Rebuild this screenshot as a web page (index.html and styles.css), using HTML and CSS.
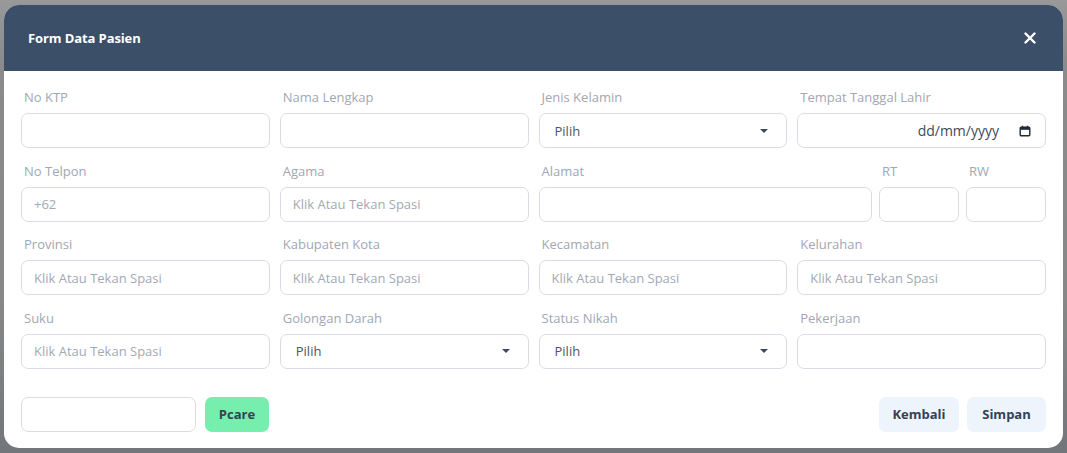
FILE: index.html
```html
<!DOCTYPE html>
<html lang="id">
<head>
    <meta charset="UTF-8">
    <meta name="viewport" content="width=device-width, initial-scale=1.0">
    <title>Form Data Pasien</title>
    <link rel="stylesheet" href="styles.css">
</head>
<body>
    <div class="overlay">
        <div class="modal">
            <div class="modal-header">
                <h2 class="modal-title">Form Data Pasien</h2>
                <button class="close-button" type="button" aria-label="Tutup">
                    <svg width="12" height="12" viewBox="0 0 12 12"><path d="M1.5 1.5 L10.5 10.5 M10.5 1.5 L1.5 10.5" stroke="#fff" stroke-width="2.4" stroke-linecap="round"/></svg>
                </button>
            </div>

            <form class="modal-body">
                <div class="form-grid">
                    <div class="field">
                        <label class="field-label">No KTP</label>
                        <input type="text" class="field-input">
                    </div>
                    <div class="field">
                        <label class="field-label">Nama Lengkap</label>
                        <input type="text" class="field-input">
                    </div>
                    <div class="field">
                        <label class="field-label">Jenis Kelamin</label>
                        <div class="field-input field-select">
                            <span>Pilih</span>
                            <span class="caret"></span>
                        </div>
                    </div>
                    <div class="field">
                        <label class="field-label">Tempat Tanggal Lahir</label>
                        <div class="field-input field-date">
                            <span>dd/mm/yyyy</span>
                            <svg width="12" height="12" viewBox="0 0 12 12"><rect x="1.2" y="2.2" width="9.6" height="8.6" rx="1" fill="none" stroke="#1f2937" stroke-width="1.4"/><rect x="1.2" y="2.2" width="9.6" height="2.6" fill="#1f2937"/><path d="M3.5 0.8 V3 M8.5 0.8 V3" stroke="#1f2937" stroke-width="1.4"/></svg>
                        </div>
                    </div>

                    <div class="field">
                        <label class="field-label">No Telpon</label>
                        <input type="text" class="field-input" placeholder="+62">
                    </div>
                    <div class="field">
                        <label class="field-label">Agama</label>
                        <input type="text" class="field-input" placeholder="Klik Atau Tekan Spasi">
                    </div>
                    <div class="field-split">
                        <div class="field">
                            <label class="field-label">Alamat</label>
                            <input type="text" class="field-input">
                        </div>
                        <div class="field">
                            <label class="field-label">RT</label>
                            <input type="text" class="field-input">
                        </div>
                        <div class="field">
                            <label class="field-label">RW</label>
                            <input type="text" class="field-input">
                        </div>
                    </div>

                    <div class="field">
                        <label class="field-label">Provinsi</label>
                        <input type="text" class="field-input" placeholder="Klik Atau Tekan Spasi">
                    </div>
                    <div class="field">
                        <label class="field-label">Kabupaten Kota</label>
                        <input type="text" class="field-input" placeholder="Klik Atau Tekan Spasi">
                    </div>
                    <div class="field">
                        <label class="field-label">Kecamatan</label>
                        <input type="text" class="field-input" placeholder="Klik Atau Tekan Spasi">
                    </div>
                    <div class="field">
                        <label class="field-label">Kelurahan</label>
                        <input type="text" class="field-input" placeholder="Klik Atau Tekan Spasi">
                    </div>

                    <div class="field">
                        <label class="field-label">Suku</label>
                        <input type="text" class="field-input" placeholder="Klik Atau Tekan Spasi">
                    </div>
                    <div class="field">
                        <label class="field-label">Golongan Darah</label>
                        <div class="field-input field-select">
                            <span>Pilih</span>
                            <span class="caret"></span>
                        </div>
                    </div>
                    <div class="field">
                        <label class="field-label">Status Nikah</label>
                        <div class="field-input field-select">
                            <span>Pilih</span>
                            <span class="caret"></span>
                        </div>
                    </div>
                    <div class="field">
                        <label class="field-label">Pekerjaan</label>
                        <input type="text" class="field-input">
                    </div>
                </div>

                <div class="form-footer">
                    <div class="footer-left">
                        <input type="text" class="field-input pcare-input">
                        <button type="button" class="btn btn-green">Pcare</button>
                    </div>
                    <div class="footer-right">
                        <button type="button" class="btn btn-light">Kembali</button>
                        <button type="submit" class="btn btn-light">Simpan</button>
                    </div>
                </div>
            </form>
        </div>
    </div>
</body>
</html>
```

FILE: styles.css
```css
:root {
    --header-bg: #3b4f69;
    --label: #a1a7b3;
    --border: #d9dce2;
    --text: #4b5567;
    --placeholder: #a3a9b4;
    --btn-text: #364152;
}

* {
    margin: 0;
    padding: 0;
    box-sizing: border-box;
    font-family: 'Open Sans', 'Noto Sans', sans-serif;
}

body {
    width: 1067px;
    height: 453px;
    overflow: hidden;
    background: linear-gradient(#999999 0, #8b8b8b 60px, #878787 300px, #72767a 453px);
}

.overlay {
    padding: 5px 4px;
}

.modal {
    width: 1059px;
    height: 443px;
    background: #fff;
    border-radius: 15px;
    overflow: hidden;
}

.modal-header {
    height: 66px;
    background: var(--header-bg);
    display: flex;
    align-items: center;
    justify-content: space-between;
    padding: 0 27px 0 24px;
}

.modal-title {
    color: #fff;
    font-size: 13px;
    font-weight: 700;
    letter-spacing: -0.1px;
}

.close-button {
    background: none;
    border: none;
    display: flex;
    cursor: pointer;
}

.modal-body {
    padding: 17px 17px 0;
}

.form-grid {
    display: grid;
    grid-template-columns: repeat(4, 1fr);
    column-gap: 10px;
    row-gap: 13.5px;
}

.field-split {
    grid-column: span 2;
    display: grid;
    grid-template-columns: 1fr 80px 80px;
    column-gap: 7px;
}

.field-label {
    display: block;
    height: 19px;
    margin-bottom: 6px;
    padding-left: 3px;
    color: var(--label);
    font-size: 13px;
    line-height: 19px;
}

.field-input {
    display: block;
    width: 100%;
    height: 35px;
    padding: 0 12px;
    border: 1px solid var(--border);
    border-radius: 7px;
    background: #fff;
    color: var(--text);
    font-size: 13px;
}

.field-input::placeholder {
    color: var(--placeholder);
}

.field-select {
    display: flex;
    align-items: center;
    justify-content: space-between;
    padding: 0 18px 0 15px;
    color: var(--text);
}

.caret {
    width: 0;
    height: 0;
    border-left: 4px solid transparent;
    border-right: 4px solid transparent;
    border-top: 4px solid #3b4a5e;
}

.field-date {
    display: flex;
    align-items: center;
    justify-content: flex-end;
    gap: 20px;
    padding: 0 14px;
    color: #3e4a5c;
    font-size: 14px;
}

.form-footer {
    display: flex;
    justify-content: space-between;
    margin-top: 28px;
}

.footer-left,
.footer-right {
    display: flex;
    gap: 8px;
}

.footer-left {
    gap: 9px;
}

.pcare-input {
    width: 175px;
}

.btn {
    height: 35px;
    border: none;
    border-radius: 7px;
    font-size: 13px;
    font-weight: 700;
    color: var(--btn-text);
    cursor: pointer;
}

.btn-green {
    width: 64px;
    background: #76eead;
}

.btn-light {
    width: 80px;
    background: #eef4fc;
}

.btn-light + .btn-light {
    width: 79px;
}
```
